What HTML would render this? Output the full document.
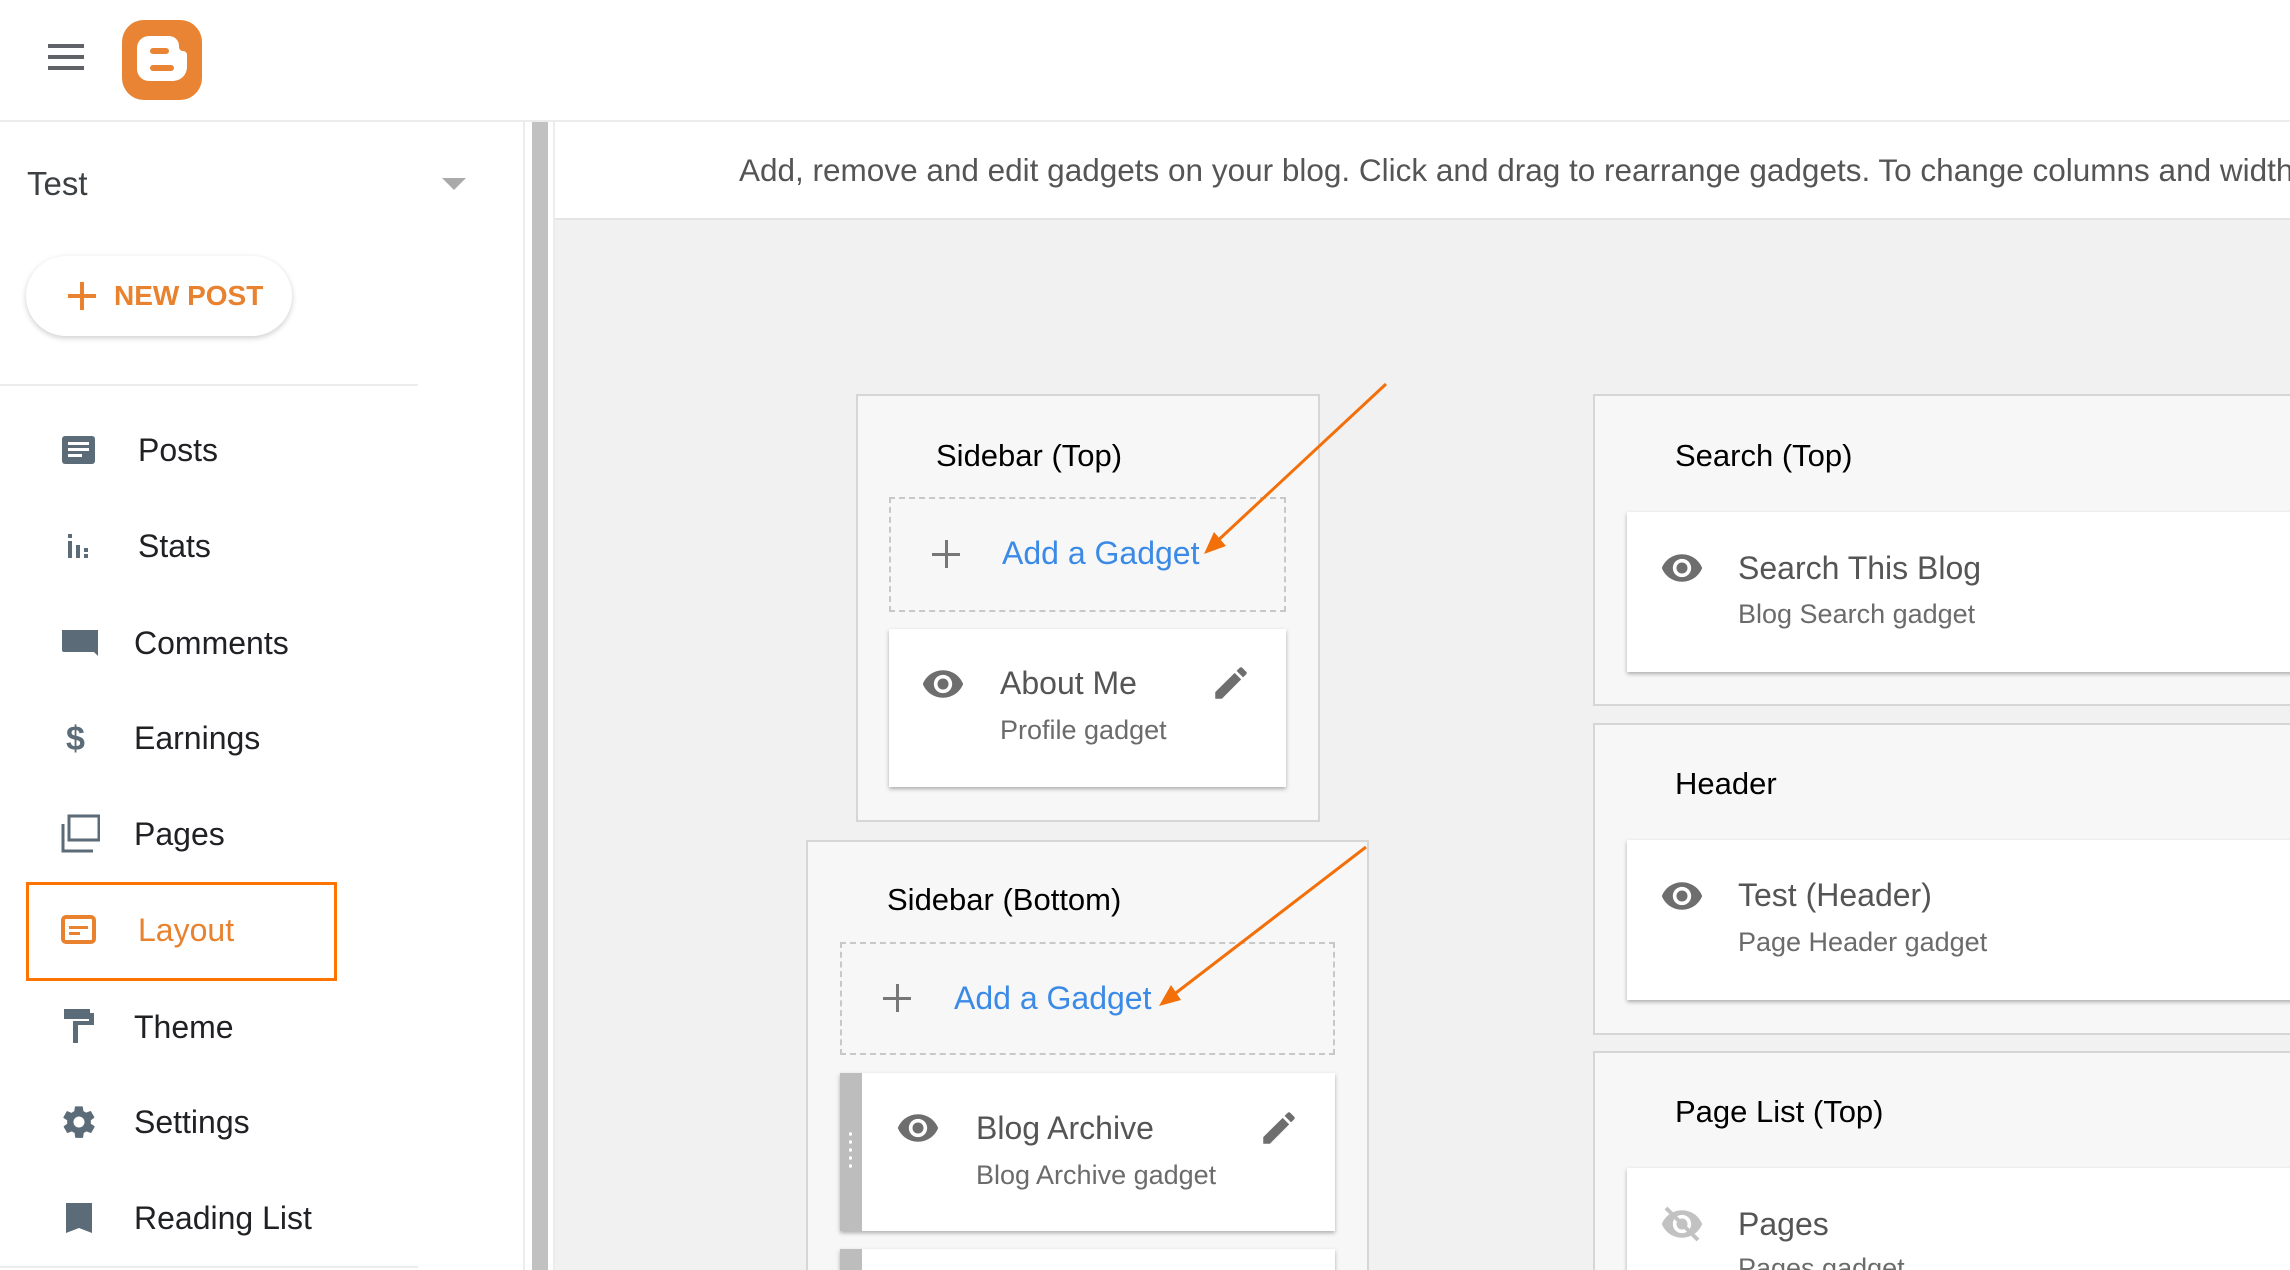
<!DOCTYPE html>
<html style="width:2290px;height:1270px;overflow:hidden"><head><meta charset="utf-8"><style>
*{margin:0;padding:0;box-sizing:border-box}
body{width:2290px;height:1270px;overflow:hidden;background:#fff;font-family:"Liberation Sans",Arial,sans-serif;position:relative}
#w{position:absolute;left:0;top:0;width:2290px;height:1270px;overflow:hidden}
.a{position:absolute}
.nav{position:absolute;left:0;width:420px;height:60px;font-size:32px;color:#202124;display:flex;align-items:center}
.nav svg{position:absolute;left:60px}
.nav span{position:absolute;left:134px}
.box{position:absolute;background:#f7f7f7;border:2px solid #d6d6d6}
.h{position:absolute;font-size:31px;color:#000}
.dash{position:absolute;border:2px dashed #c8c8c8}
.add{position:absolute;font-size:32px;color:#3b8ae6}
.card{position:absolute;background:#fff;box-shadow:0 2px 4px rgba(0,0,0,.3)}
.t{position:absolute;font-size:32px;color:#555}
.s{position:absolute;font-size:27px;color:#6b6b6b}
</style></head><body><div id="w">
<!-- top bar -->
<div class="a" style="left:0;top:0;width:2290px;height:122px;background:#fff;border-bottom:2px solid #ececec"></div>
<div class="a" style="left:48px;top:44px;width:36px;height:4px;background:#5f6368"></div>
<div class="a" style="left:48px;top:55px;width:36px;height:4px;background:#5f6368"></div>
<div class="a" style="left:48px;top:66px;width:36px;height:4px;background:#5f6368"></div>
<svg class="a" style="left:122px;top:20px" width="80" height="80" viewBox="0 0 80 80">
<rect width="80" height="80" rx="22" fill="#e88433"/>
<path d="M27 16h20a10 10 0 0 1 10 10v1a4 4 0 0 0 4 4a4 4 0 0 1 4 4v12a14 14 0 0 1-14 14h-24a12 12 0 0 1-12-12v-21a12 12 0 0 1 12-12z" fill="#fff"/>
<rect x="28" y="28" width="19" height="6" rx="3" fill="#e88433"/>
<rect x="28" y="45" width="24" height="6" rx="3" fill="#e88433"/>
</svg>
<!-- sidebar -->
<div class="a" style="left:27px;top:165px;font-size:33px;color:#3c4043">Test</div>
<div class="a" style="left:442px;top:178px;width:0;height:0;border-left:12px solid transparent;border-right:12px solid transparent;border-top:12px solid #aaa"></div>
<div class="a" style="left:26px;top:256px;width:266px;height:80px;border-radius:40px;background:#fff;box-shadow:0 2px 6px rgba(0,0,0,.2)"></div>
<div class="a" style="left:68px;top:294px;width:28px;height:4px;background:#e8822f"></div>
<div class="a" style="left:80px;top:282px;width:4px;height:28px;background:#e8822f"></div>
<div class="a" style="left:114px;top:280px;font-size:28px;font-weight:bold;color:#e8822f">NEW POST</div>
<div class="a" style="left:0;top:384px;width:418px;height:2px;background:#ececec"></div>
<div class="a" style="left:0;top:1266px;width:418px;height:2px;background:#ececec"></div>
<div class="a" style="left:523px;top:122px;width:2px;height:1148px;background:#ececec"></div>
<div class="a" style="left:532px;top:122px;width:16px;height:1148px;background:#c1c1c1"></div>
<div class="a" style="left:553px;top:122px;width:2px;height:1148px;background:#ececec"></div>

<div class="nav" style="top:420px"><svg width="36" height="36" viewBox="0 0 36 36"><rect x="2" y="4" width="33" height="28" rx="3" fill="#5b6b77"/><rect x="8" y="10" width="21" height="3" fill="#fff"/><rect x="8" y="16" width="21" height="3" fill="#fff"/><rect x="8" y="22" width="14" height="3" fill="#fff"/></svg><span style="left:138px">Posts</span></div>
<div class="nav" style="top:516px"><svg width="36" height="36" viewBox="0 0 36 36"><rect x="8" y="6" width="4" height="4" fill="#5b6b77"/><rect x="8" y="13" width="4" height="17" fill="#5b6b77"/><rect x="16" y="17" width="4" height="13" fill="#5b6b77"/><rect x="24" y="20" width="4" height="4" fill="#5b6b77"/><rect x="24" y="26" width="4" height="4" fill="#5b6b77"/></svg><span style="left:138px">Stats</span></div>
<div class="nav" style="top:613px"><svg width="38" height="38" viewBox="0 0 38 38"><path d="M2 6h36v26l-4-4h-30a2 2 0 0 1-2-2z" fill="#5b6b77"/></svg><span>Comments</span></div>
<div class="nav" style="top:708px"><svg width="36" height="36" viewBox="0 0 36 36"><text x="6" y="30" font-size="34" font-family="Liberation Sans" font-weight="bold" fill="#5b6b77">$</text></svg><span>Earnings</span></div>
<div class="nav" style="top:804px"><svg width="40" height="40" viewBox="0 0 40 40"><rect x="9" y="2" width="30" height="24" fill="none" stroke="#5b6b77" stroke-width="3"/><path d="M3 10v27h30" fill="none" stroke="#5b6b77" stroke-width="3"/></svg><span>Pages</span></div>
<div class="a" style="left:26px;top:882px;width:311px;height:99px;border:3px solid #ff7400"></div>
<div class="nav" style="top:900px;color:#e8822f"><svg width="36" height="36" viewBox="0 0 36 36"><rect x="3" y="5" width="31" height="25" rx="3" fill="none" stroke="#e8822f" stroke-width="4"/><rect x="9" y="14" width="19" height="3" fill="#e8822f"/><rect x="9" y="20" width="11" height="3" fill="#e8822f"/></svg><span style="left:138px">Layout</span></div>
<div class="nav" style="top:997px"><svg width="36" height="40" viewBox="0 0 36 40"><rect x="4" y="2" width="26" height="10" fill="#5b6b77"/><path d="M30 6h4v12h-16v18h-5v-22h16v-4z" fill="#5b6b77"/></svg><span>Theme</span></div>
<div class="nav" style="top:1092px"><svg width="38" height="38" viewBox="0 0 24 24"><path fill="#5b6b77" d="M19.4 13c0-.3.1-.6.1-1s0-.7-.1-1l2.1-1.6c.2-.2.2-.4.1-.6l-2-3.5c-.1-.2-.4-.3-.6-.2l-2.5 1c-.5-.4-1.100-.7-1.700-1l-.4-2.600c0-.2-.3-.4-.5-.4h-4c-.3 0-.5.2-.5.4l-.4 2.700c-.6.2-1.100.6-1.700 1l-2.500-1c-.2-.1-.5 0-.6.2l-2 3.500c-.1.2-.1.5.1.6L4.600 11c0 .3-.1.7-.1 1s0 .7.1 1l-2.100 1.600c-.2.2-.2.4-.1.6l2 3.500c.1.2.4.3.6.2l2.500-1c.5.4 1.100.7 1.700 1l.4 2.700c0 .2.2.4.5.4h4c.3 0 .5-.2.5-.4l.4-2.700c.6-.3 1.200-.6 1.700-1l2.500 1c.2.1.5 0 .6-.2l2-3.500c.1-.2.1-.5-.1-.6L19.400 13zM12 15.500c-1.900 0-3.500-1.600-3.500-3.500s1.600-3.500 3.500-3.500 3.500 1.600 3.500 3.500-1.600 3.500-3.500 3.500z"/></svg><span>Settings</span></div>
<div class="nav" style="top:1188px"><svg width="36" height="36" viewBox="0 0 36 36"><path d="M6 3h26v30l-13-5l-13 5z" fill="#5b6b77"/></svg><span>Reading List</span></div>

<!-- main -->
<div class="a" style="left:555px;top:122px;width:1735px;height:1148px;background:#f1f1f1"></div>
<div class="a" style="left:555px;top:122px;width:1735px;height:98px;background:#fff;border-bottom:2px solid #e4e4e4"></div>
<div class="a" style="left:739px;top:152px;font-size:31.5px;color:#555;white-space:nowrap">Add, remove and edit gadgets on your blog. Click and drag to rearrange gadgets. To change columns and width</div>

<svg width="0" height="0" style="position:absolute"><defs>
<symbol id="eye" viewBox="0 0 24 24"><path fill="currentColor" d="M12 4.5C7 4.5 2.7 7.6 1 12c1.7 4.4 6 7.5 11 7.5s9.3-3.1 11-7.5c-1.7-4.4-6-7.5-11-7.5zM12 17c-2.8 0-5-2.2-5-5s2.2-5 5-5 5 2.2 5 5-2.2 5-5 5zm0-8c-1.7 0-3 1.3-3 3s1.3 3 3 3 3-1.3 3-3-1.3-3-3-3z"/></symbol>
<symbol id="pen" viewBox="0 0 24 24"><path fill="currentColor" d="M3 17.2V21h3.8L17.8 9.9l-3.7-3.7L3 17.2zM20.7 7c.4-.4.4-1 0-1.4l-2.3-2.3c-.4-.4-1-.4-1.4 0l-1.8 1.8 3.7 3.7L20.7 7z"/></symbol>
</defs></svg>

<!-- Sidebar top -->
<div class="box" style="left:856px;top:394px;width:464px;height:428px"></div>
<div class="h" style="left:936px;top:438px">Sidebar (Top)</div>
<div class="dash" style="left:889px;top:497px;width:397px;height:115px"></div>
<div class="a" style="left:932px;top:553px;width:28px;height:3px;background:#777"></div>
<div class="a" style="left:945px;top:540px;width:3px;height:28px;background:#777"></div>
<div class="add" style="left:1002px;top:535px">Add a Gadget</div>
<div class="card" style="left:889px;top:629px;width:397px;height:158px"></div>
<svg class="a" style="left:921px;top:662px;color:#6e6e6e" width="44" height="44"><use href="#eye"/></svg>
<div class="t" style="left:1000px;top:665px">About Me</div>
<div class="s" style="left:1000px;top:715px">Profile gadget</div>
<svg class="a" style="left:1210px;top:662px;color:#6e6e6e" width="42" height="42"><use href="#pen"/></svg>

<!-- Sidebar bottom -->
<div class="box" style="left:806px;top:840px;width:563px;height:460px"></div>
<div class="h" style="left:887px;top:882px">Sidebar (Bottom)</div>
<div class="dash" style="left:840px;top:942px;width:495px;height:113px"></div>
<div class="a" style="left:883px;top:997px;width:28px;height:3px;background:#777"></div>
<div class="a" style="left:896px;top:984px;width:3px;height:28px;background:#777"></div>
<div class="add" style="left:954px;top:980px">Add a Gadget</div>
<div class="card" style="left:840px;top:1073px;width:495px;height:158px"></div>
<div class="a" style="left:840px;top:1073px;width:22px;height:158px;background:#bdbdbd"></div>
<div class="a" style="left:849px;top:1130px;width:3px;height:40px;background-image:radial-gradient(circle,#fff 1.5px,transparent 2px);background-size:3px 8px"></div>
<svg class="a" style="left:896px;top:1106px;color:#6e6e6e" width="44" height="44"><use href="#eye"/></svg>
<div class="t" style="left:976px;top:1110px">Blog Archive</div>
<div class="s" style="left:976px;top:1160px">Blog Archive gadget</div>
<svg class="a" style="left:1258px;top:1107px;color:#6e6e6e" width="42" height="42"><use href="#pen"/></svg>
<div class="card" style="left:840px;top:1249px;width:495px;height:40px"></div>
<div class="a" style="left:840px;top:1249px;width:22px;height:30px;background:#bdbdbd"></div>

<!-- right column -->
<div class="box" style="left:1593px;top:394px;width:720px;height:312px"></div>
<div class="h" style="left:1675px;top:438px">Search (Top)</div>
<div class="card" style="left:1627px;top:512px;width:700px;height:160px"></div>
<svg class="a" style="left:1660px;top:546px;color:#6e6e6e" width="44" height="44"><use href="#eye"/></svg>
<div class="t" style="left:1738px;top:550px">Search This Blog</div>
<div class="s" style="left:1738px;top:599px">Blog Search gadget</div>

<div class="box" style="left:1593px;top:723px;width:720px;height:312px"></div>
<div class="h" style="left:1675px;top:766px">Header</div>
<div class="card" style="left:1627px;top:840px;width:700px;height:160px"></div>
<svg class="a" style="left:1660px;top:874px;color:#6e6e6e" width="44" height="44"><use href="#eye"/></svg>
<div class="t" style="left:1738px;top:877px">Test (Header)</div>
<div class="s" style="left:1738px;top:927px">Page Header gadget</div>

<div class="box" style="left:1593px;top:1051px;width:720px;height:260px"></div>
<div class="h" style="left:1675px;top:1094px">Page List (Top)</div>
<div class="card" style="left:1627px;top:1168px;width:700px;height:160px"></div>
<svg class="a" style="left:1660px;top:1202px;color:#c2c2c2" width="44" height="44"><use href="#eye"/><line x1="6" y1="6" x2="38" y2="38" stroke="#c2c2c2" stroke-width="4"/></svg>
<div class="t" style="left:1738px;top:1206px">Pages</div>
<div class="s" style="left:1738px;top:1253px">Pages gadget</div>

<!-- arrows -->
<svg class="a" style="left:0;top:0" width="2290" height="1270">
<g stroke="#f36f0a" stroke-width="3" fill="#f36f0a">
<line x1="1386" y1="384" x2="1212" y2="546"/>
<polygon points="1204,554 1214,532 1226,546" stroke="none"/>
<line x1="1366" y1="847" x2="1168" y2="999"/>
<polygon points="1159,1006 1171,985 1181,1000" stroke="none"/>
</g></svg>
</div></body></html>
